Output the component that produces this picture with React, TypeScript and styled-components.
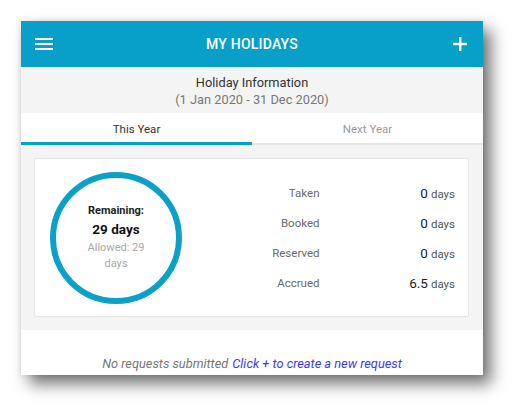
import React from "react";
import styled, { createGlobalStyle } from "styled-components";

const Global = createGlobalStyle`
  html, body { margin: 0; padding: 0; background: #ffffff; }
  body { font-family: Roboto, "Noto Sans", Arial, sans-serif; }
  * { box-sizing: border-box; }
`;

const Page = styled.div`
  width: 525px;
  height: 412px;
  padding: 21px 0 0 21px;
  background: #ffffff;
`;

const Panel = styled.div`
  width: 462px;
  height: 354px;
  display: flex;
  flex-direction: column;
  background: #ffffff;
  box-shadow: 0 0 5px rgba(0, 0, 0, 0.12), 8px 9px 15px rgba(0, 0, 0, 0.55);
`;

const Header = styled.header`
  height: 46px;
  flex: none;
  display: grid;
  grid-template-columns: 46px 1fr 46px;
  align-items: center;
  background: #089fc8;
  color: #ffffff;
`;

const Title = styled.h1`
  margin: 0;
  text-align: center;
  font-size: 14px;
  font-weight: 500;
  letter-spacing: 0.2px;
`;

const IconButton = styled.div`
  display: flex;
  align-items: center;
  justify-content: center;
  height: 46px;
`;

const Info = styled.div`
  height: 46px;
  flex: none;
  display: flex;
  flex-direction: column;
  align-items: center;
  justify-content: center;
  background: #f4f4f4;
  font-size: 12.8px;
  line-height: 17px;
  padding-top: 1px;
`;

const InfoTitle = styled.div`
  color: #333333;
`;

const InfoRange = styled.div`
  color: #777777;
`;

const Tabs = styled.div`
  height: 32px;
  flex: none;
  display: grid;
  grid-template-columns: 1fr 1fr;
  border-bottom: 2px solid #e6e6e6;
  background: #ffffff;
`;

const Tab = styled.div<{ $active?: boolean }>`
  display: flex;
  align-items: center;
  justify-content: center;
  font-size: 11.5px;
  color: ${(p) => (p.$active ? "#333333" : "#9a9a9a")};
  box-shadow: ${(p) => (p.$active ? "inset 0 -3px 0 #089fc8" : "none")};
  margin-bottom: -2px;
`;

const Body = styled.div`
  flex: none;
  height: 185px;
  background: #f4f4f4;
  padding: 13px 14px 13px 13px;
`;

const Card = styled.div`
  height: 159px;
  background: #ffffff;
  border: 1px solid #e4e4e4;
  border-radius: 2px;
  display: flex;
  align-items: center;
  padding: 0 12px 0 15px;
`;

const Ring = styled.div`
  width: 132px;
  height: 132px;
  flex: none;
  border-radius: 50%;
  border: 6px solid #0aa0c8;
  display: flex;
  flex-direction: column;
  align-items: center;
  justify-content: center;
  text-align: center;
  padding: 0 22px;
`;

const RingLabel = styled.div`
  font-size: 11px;
  font-weight: 700;
  color: #222222;
  line-height: 14px;
`;

const RingValue = styled.div`
  font-size: 13.5px;
  font-weight: 700;
  color: #111111;
  margin: 3px 0 3px;
`;

const RingSub = styled.div`
  font-size: 11px;
  color: #a8a8a8;
  line-height: 16px;
`;

const Stats = styled.div`
  flex: 1;
  display: grid;
  grid-template-columns: 1fr 1fr;
  grid-auto-rows: 30px;
  align-content: center;
  align-items: center;
  padding-right: 1px;
`;

const StatLabel = styled.div`
  text-align: right;
  font-size: 11.5px;
  color: #6a6a6a;
  padding-right: 0;
  margin-right: -1px;
`;

const StatValue = styled.div`
  text-align: right;
  font-size: 11.5px;
  color: #555555;
`;

const Num = styled.span`
  font-size: 13.5px;
  color: #222222;
  margin-right: 3px;
`;

const Footer = styled.div`
  flex: 1;
  display: flex;
  align-items: flex-end;
  justify-content: center;
  padding-bottom: 4px;
  font-size: 12.8px;
  font-style: italic;
  color: #777777;
`;

const Link = styled.span`
  color: #3b3bf0;
  margin-left: 4px;
`;

const stats = [
  { label: "Taken", value: "0" },
  { label: "Booked", value: "0" },
  { label: "Reserved", value: "0" },
  { label: "Accrued", value: "6.5" },
];

export default function App() {
  return (
    <>
      <Global />
      <Page>
        <Panel>
          <Header>
            <IconButton>
              <svg width="18" height="14" viewBox="0 0 18 14">
                <rect x="0" y="1" width="18" height="2" fill="#fff" />
                <rect x="0" y="6" width="18" height="2" fill="#fff" />
                <rect x="0" y="11" width="18" height="2" fill="#fff" />
              </svg>
            </IconButton>
            <Title>MY HOLIDAYS</Title>
            <IconButton>
              <svg width="14" height="14" viewBox="0 0 14 14">
                <rect x="6" y="0" width="2.4" height="14" fill="#fff" />
                <rect x="0" y="5.8" width="14" height="2.4" fill="#fff" />
              </svg>
            </IconButton>
          </Header>
          <Info>
            <InfoTitle>Holiday Information</InfoTitle>
            <InfoRange>(1 Jan 2020 - 31 Dec 2020)</InfoRange>
          </Info>
          <Tabs>
            <Tab $active>This Year</Tab>
            <Tab>Next Year</Tab>
          </Tabs>
          <Body>
            <Card>
              <Ring>
                <RingLabel>Remaining:</RingLabel>
                <RingValue>29 days</RingValue>
                <RingSub>Allowed: 29 days</RingSub>
              </Ring>
              <Stats>
                {stats.map((s) => (
                  <React.Fragment key={s.label}>
                    <StatLabel>{s.label}</StatLabel>
                    <StatValue>
                      <Num>{s.value}</Num>days
                    </StatValue>
                  </React.Fragment>
                ))}
              </Stats>
            </Card>
          </Body>
          <Footer>
            No requests submitted<Link>Click + to create a new request</Link>
          </Footer>
        </Panel>
      </Page>
    </>
  );
}
